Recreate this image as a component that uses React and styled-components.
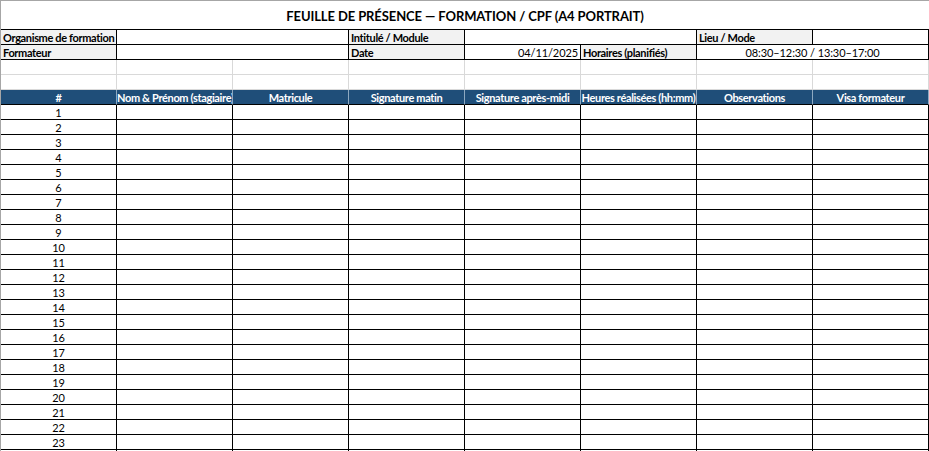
import React from 'react';
import styled, { createGlobalStyle } from 'styled-components';

const GlobalStyle = createGlobalStyle`
  html, body {
    margin: 0;
    padding: 0;
    background: #fff;
    overflow: hidden;
  }
  body {
    font-family: Lato, "Liberation Sans", sans-serif;
    color: #000;
  }
`;

const Sheet = styled.div`
  width: 929px;
  height: 451px;
  box-sizing: border-box;
  border-top: 1px solid #a6a6a6;
  border-left: 1px solid #a6a6a6;
  overflow: hidden;
`;

const Grid = styled.div`
  display: grid;
  grid-template-columns: repeat(8, 116px);
  grid-template-rows: 29px;
  grid-auto-rows: 15px;
`;

const TitleCell = styled.div`
  grid-column: span 8;
  box-sizing: border-box;
  border-bottom: 1px solid #000;
  display: flex;
  align-items: center;
  justify-content: center;
  font-weight: 700;
  font-size: 13px;
  letter-spacing: -0.1px;
  padding-top: 2px;
`;

const Cell = styled.div`
  grid-column: span ${p => p.span || 1};
  box-sizing: border-box;
  border-right: 1px solid ${p => p.line || '#000'};
  border-bottom: 1px solid ${p => p.line || '#000'};
  background: ${p => p.shade ? '#f2f2f2' : '#fff'};
  font-size: 11px;
  font-weight: ${p => p.bold ? 700 : 400};
  letter-spacing: ${p => p.bold ? '-0.35px' : '-0.1px'};
  line-height: 15px;
  padding: 0 2px;
  white-space: nowrap;
  overflow: hidden;
  text-align: ${p => p.align || 'left'};
`;

const HeadCell = styled.div`
  box-sizing: border-box;
  background: #1f4e79;
  color: #fff;
  border-right: 1px solid #8ea9c1;
  border-bottom: 1px solid #000;
  font-size: 11px;
  font-weight: 700;
  letter-spacing: -0.35px;
  line-height: 15px;
  text-align: center;
  white-space: nowrap;
  overflow: hidden;
`;

const NumCell = styled(Cell)`
  position: relative;
  text-align: center;
  &::before {
    content: '';
    display: ${p => p.selected ? 'block' : 'none'};
    position: absolute;
    left: -1px;
    top: 0;
    bottom: 0;
    width: 1px;
    background: #217346;
  }
`;

const headers = [
  '#',
  'Nom & Prénom (stagiaire)',
  'Matricule',
  'Signature matin',
  'Signature après-midi',
  'Heures réalisées (hh:mm)',
  'Observations',
  'Visa formateur',
];

const rows = Array.from({ length: 23 }, (_, i) => i + 1);

export default function App() {
  return (
    <Sheet>
      <GlobalStyle />
      <Grid>
        <TitleCell>FEUILLE DE PRÉSENCE — FORMATION / CPF (A4 PORTRAIT)</TitleCell>

        <Cell shade bold>Organisme de formation</Cell>
        <Cell span={2} />
        <Cell shade bold>Intitulé / Module</Cell>
        <Cell span={2} />
        <Cell shade bold>Lieu / Mode</Cell>
        <Cell />

        <Cell shade bold>Formateur</Cell>
        <Cell span={2} />
        <Cell shade bold>Date</Cell>
        <Cell align="right">04/11/2025</Cell>
        <Cell shade bold>Horaires (planifiés)</Cell>
        <Cell span={2} align="center">08:30–12:30 / 13:30–17:00</Cell>

        {[0, 1].map(r =>
          headers.map((_, c) => <Cell key={`s${r}-${c}`} line="#d9d9d9" />)
        )}

        {headers.map(h => <HeadCell key={h}>{h}</HeadCell>)}

        {rows.map(n => (
          <React.Fragment key={n}>
            <NumCell selected={n === 17}>{n}</NumCell>
            {headers.slice(1).map(h => <Cell key={h} />)}
          </React.Fragment>
        ))}

        {headers.map(h => <Cell key={`tail-${h}`} />)}
      </Grid>
    </Sheet>
  );
}
